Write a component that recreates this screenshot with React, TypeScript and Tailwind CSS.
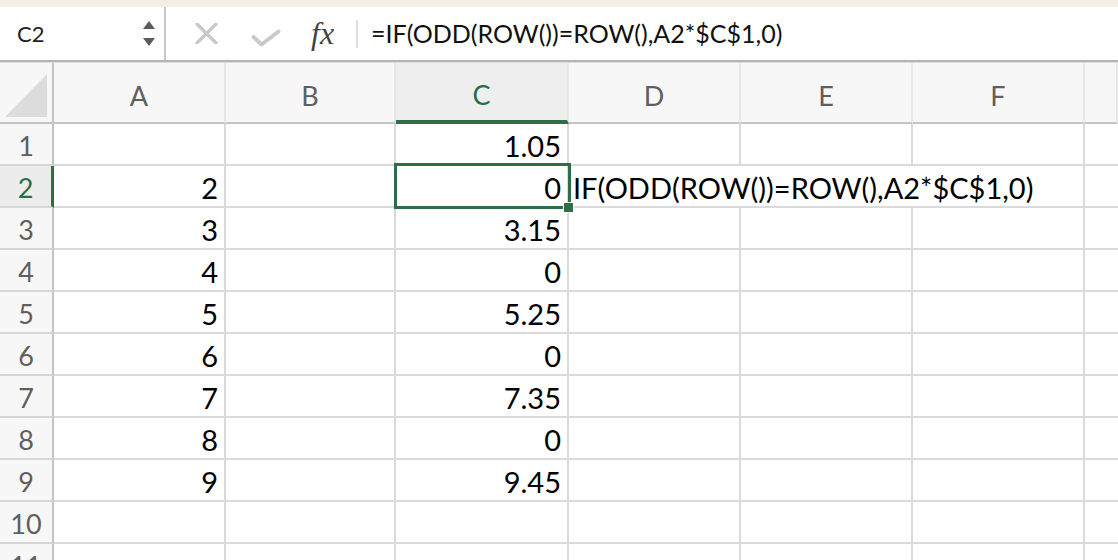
const COLS = ["A", "B", "C", "D", "E", "F", ""];
const WIDTHS = ["w-[172px]", "w-[170px]", "w-[173px]", "w-[172px]", "w-[172px]", "w-[172px]", "flex-1"];

const ROWS: [string, string][] = [
  ["", "1.05"],
  ["2", "0"],
  ["3", "3.15"],
  ["4", "0"],
  ["5", "5.25"],
  ["6", "0"],
  ["7", "7.35"],
  ["8", "0"],
  ["9", "9.45"],
  ["", ""],
  ["", ""],
];

function Toolbar() {
  return (
    <div className="h-[53px] flex items-center">
      <div className="w-[164px] h-full flex items-center">
        <span className="pl-[17px] text-[22px] text-[#1f1f1f]">C2</span>
        <div className="ml-auto mr-[9px] flex flex-col gap-[9px]">
          <svg width="12" height="8" viewBox="0 0 12 8">
            <path d="M6 0 L12 8 L0 8 Z" fill="#5c5c5c" />
          </svg>
          <svg width="12" height="8" viewBox="0 0 12 8">
            <path d="M0 0 L12 0 L6 8 Z" fill="#5c5c5c" />
          </svg>
        </div>
      </div>
      <div className="w-[2px] self-stretch bg-[#c8c8c8]" />
      <svg className="ml-[29px]" width="23" height="21" viewBox="0 0 23 21">
        <path d="M2 1 L21 20 M21 1 L2 20" stroke="#c9c9c9" strokeWidth="3.4" strokeLinecap="round" />
      </svg>
      <svg className="ml-[33px] mt-[8px]" width="30" height="18" viewBox="0 0 30 18">
        <path d="M2.5 8 L10.5 15.5 L27.5 2.5" stroke="#c9c9c9" strokeWidth="4" fill="none" strokeLinecap="round" strokeLinejoin="round" />
      </svg>
      <span className="ml-[30px] w-[34px] text-[32px] italic text-[#444] font-['Liberation_Serif',serif] leading-none -mt-[2px]">
        fx
      </span>
      <div className="ml-[11px] w-[2px] h-[28px] bg-[#dedede]" />
      <span className="ml-[13px] text-[25px] text-[#111] whitespace-nowrap">=IF(ODD(ROW())=ROW(),A2*$C$1,0)</span>
    </div>
  );
}

function HeaderRow() {
  return (
    <div className="flex h-[61px]">
      <div className="w-[54px] h-full bg-[#f7f7f7] border-r-2 border-b-2 border-[#c4c4c4] flex items-end justify-center pb-[4px]">
        <svg width="46" height="46" viewBox="0 0 46 46">
          <path d="M2 45 L44 2 L44 45 Z" fill="#dcdcdc" />
        </svg>
      </div>
      {COLS.map((c, i) => {
        const active = c === "C";
        return (
          <div
            key={i}
            className={`${WIDTHS[i]} h-full flex items-center justify-center pt-[8px] text-[27px] border-r-2 border-r-[#e6e6e6] ${
              active
                ? "bg-[#eeeeee] text-[#237046] border-b-4 border-b-[#2d6e46]"
                : "bg-[#f7f7f7] text-[#5f5f5f] border-b-2 border-b-[#c4c4c4]"
            }`}
          >
            {c}
          </div>
        );
      })}
    </div>
  );
}

function DataRow({ n, a, c }: { n: number; a: string; c: string }) {
  const active = n === 2;
  return (
    <div className="flex h-[42px]">
      <div
        className={`w-[54px] h-full flex items-center justify-center pt-[4px] text-[27px] border-b-2 border-b-[#d6d6d6] ${
          active
            ? "bg-[#ececec] text-[#237046] border-r-[3px] border-r-[#2d6e46]"
            : "bg-[#f7f7f7] text-[#5f5f5f] border-r-2 border-r-[#c4c4c4]"
        }`}
      >
        {n}
      </div>
      <div className="w-[172px] h-full flex items-center justify-end pr-[6px] pt-[4px] text-[29px] text-black border-r-2 border-b-2 border-[#dadada]">
        {a}
      </div>
      <div className="w-[170px] h-full border-r-2 border-b-2 border-[#dadada]" />
      <div className="w-[173px] h-full flex items-center justify-end pr-[6px] pt-[4px] text-[29px] text-black border-r-2 border-b-2 border-[#dadada]">
        {c}
      </div>
      {active ? (
        <div className="w-[516px] h-full flex items-center pl-[4px] pt-[4px] text-[29px] text-black whitespace-nowrap border-r-2 border-b-2 border-[#dadada]">
          IF(ODD(ROW())=ROW(),A2*$C$1,0)
        </div>
      ) : (
        <>
          <div className="w-[172px] h-full border-r-2 border-b-2 border-[#dadada]" />
          <div className="w-[172px] h-full border-r-2 border-b-2 border-[#dadada]" />
          <div className="w-[172px] h-full border-r-2 border-b-2 border-[#dadada]" />
        </>
      )}
      <div className="flex-1 h-full border-b-2 border-[#dadada]" />
    </div>
  );
}

function Sheet() {
  return (
    <div className="relative">
      <HeaderRow />
      {ROWS.map(([a, c], i) => (
        <DataRow key={i} n={i + 1} a={a} c={c} />
      ))}
      <div className="absolute left-[394px] top-[100px] w-[177px] h-[46px] border-[3px] border-[#2d6e46]" />
      <div className="absolute left-[563px] top-[139px] w-[11px] h-[11px] bg-[#2d6e46] border border-white" />
    </div>
  );
}

export default function App() {
  return (
    <div className="w-[1118px] h-[560px] overflow-hidden bg-white font-[Lato,sans-serif]">
      <div className="h-[7px] bg-[#f4eee2]" />
      <Toolbar />
      <div className="h-[2px] bg-[#b4b4b4]" />
      <div className="h-[1px] bg-[#dedede]" />
      <Sheet />
    </div>
  );
}
